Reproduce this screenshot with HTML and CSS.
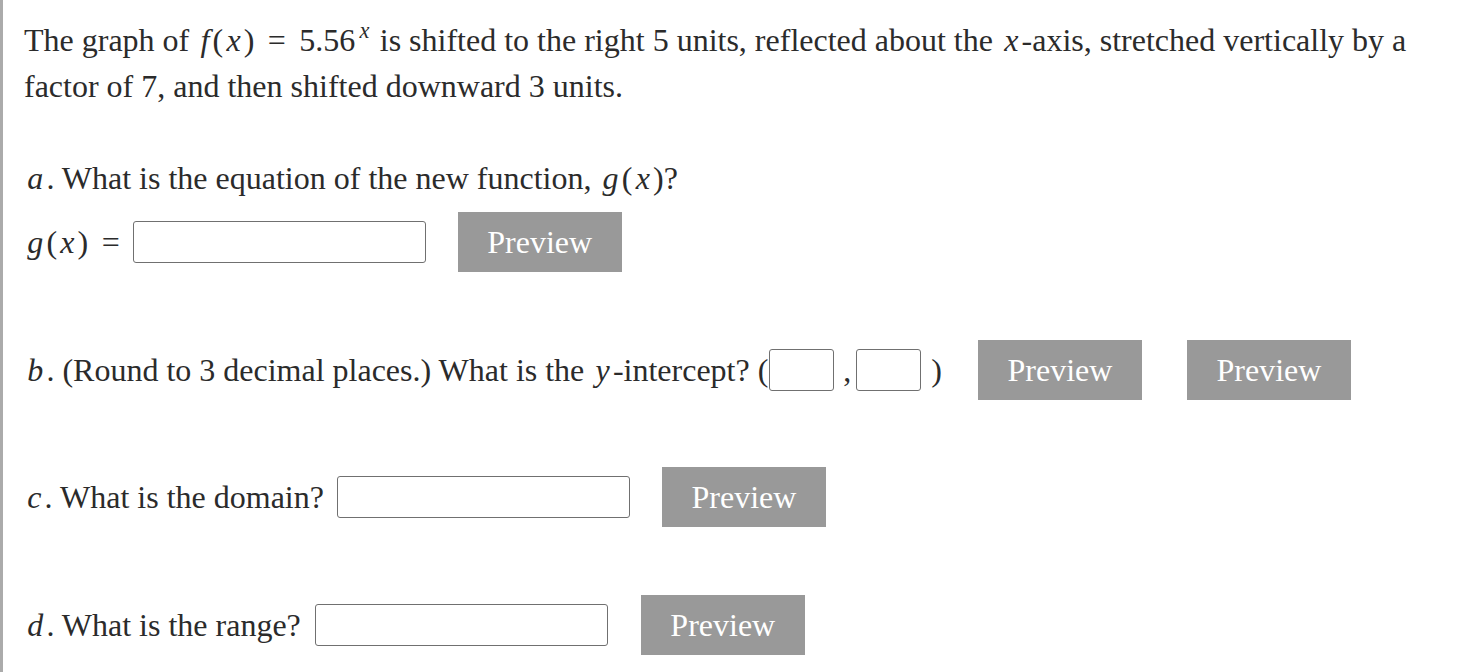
FILE: index.html
```
<!DOCTYPE html>
<html>
<head>
<meta charset="utf-8">
<link rel="stylesheet" href="styles.css">
</head>
<body>
<div class="page">
  <p class="intro">The graph of <span class="m"><i>f</i>(<i>x</i>)<span class="eq">=</span>5.56<sup><i>x</i></sup></span> is shifted to the right 5 units, reflected about the <span class="m"><i>x</i></span>-axis, stretched vertically by a factor of 7, and then shifted downward 3 units.</p>

  <div class="q q-a"><span class="m"><i>a</i></span>. What is the equation of the new function, <span class="m"><i>g</i>(<i>x</i>)</span>?</div>
  <div class="row row-a">
    <span class="m"><i>g</i>(<i>x</i>)<span class="eq eq-end">=</span></span>
    <input class="ans wide" type="text">
    <button class="preview">Preview</button>
  </div>

  <div class="row row-b">
    <span><span class="m"><i>b</i></span>. (Round to 3 decimal places.) What is the <span class="m"><i>y</i></span>-intercept? (</span>
    <input class="ans small first" type="text">
    <span class="comma">,</span>
    <input class="ans small" type="text">
    <span class="close">)</span>
    <button class="preview">Preview</button>
    <button class="preview second">Preview</button>
  </div>

  <div class="row row-c">
    <span><span class="m"><i>c</i></span>. What is the domain?</span>
    <input class="ans wide" type="text">
    <button class="preview">Preview</button>
  </div>

  <div class="row row-d">
    <span><span class="m"><i>d</i></span>. What is the range?</span>
    <input class="ans wide" type="text">
    <button class="preview">Preview</button>
  </div>
</div>
</body>
</html>
```

FILE: styles.css
```
html, body {
  margin: 0;
  padding: 0;
  background: #ffffff;
}

body {
  font-family: "Liberation Serif", "Times New Roman", serif;
  font-size: 32px;
  color: #2b2b2b;
}

.page {
  box-sizing: border-box;
  min-height: 672px;
  border-left: 3px solid #ababab;
  padding: 17px 0 0 21px;
}

.intro {
  margin: 0;
  line-height: 46px;
  width: 1420px;
}

.m {
  font-family: "Liberation Serif", "Times New Roman", serif;
}

.m i {
  font-family: "Liberation Serif", "Times New Roman", serif;
  font-style: italic;
  margin: 0 0.1em;
}

.eq {
  margin: 0 0.42em;
}

.eq-end {
  margin-right: 0;
}

sup {
  font-size: 0.7em;
  line-height: 0;
  vertical-align: 0.6em;
  margin-left: 2px;
}

.q {
  line-height: 46px;
  white-space: nowrap;
}

.q-a {
  margin-top: 46px;
}

.row {
  display: flex;
  align-items: center;
  height: 60px;
  white-space: nowrap;
}

.row-a { margin-top: 11px; }
.row-b { margin-top: 68px; }
.row-c { margin-top: 67px; }
.row-d { margin-top: 68px; }

.ans {
  box-sizing: border-box;
  height: 42px;
  border: 1.5px solid #707070;
  border-radius: 3px;
  background: #fff;
  margin: 0;
  padding: 0;
  outline: none;
}

.ans.wide {
  width: 293px;
  margin-left: 13px;
}

.row-d .ans.wide {
  margin-left: 14px;
}

.ans.small {
  width: 65px;
}

.ans.first {
  margin-left: 1px;
}

.comma {
  margin: 0 5px 0 9px;
}

.close {
  margin-left: 10px;
}

.preview {
  box-sizing: border-box;
  width: 164px;
  height: 60px;
  margin: 0 0 0 32px;
  padding: 0;
  border: none;
  background: #999999;
  color: #ffffff;
  font-family: "Liberation Serif", "Times New Roman", serif;
  font-size: 32px;
}

.row-d .preview {
  margin-left: 33px;
}

.row-b .preview {
  margin-left: 36px;
}

.row-b .preview.second {
  margin-left: 45px;
}
```
